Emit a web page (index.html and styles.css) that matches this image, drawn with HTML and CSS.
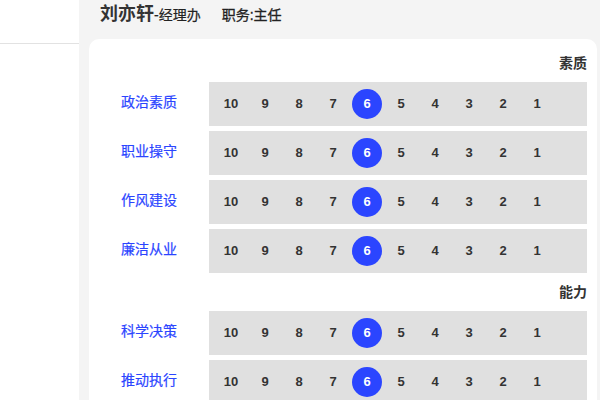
FILE: index.html
```html
<!DOCTYPE html>
<html lang="zh">
<head>
<meta charset="utf-8">
<link rel="stylesheet" href="styles.css">
</head>
<body>
<div class="page">
  <aside class="side"><div class="side-top"></div></aside>
  <main class="main">
    <header class="head">
      <span class="name">刘亦轩</span><span class="dept">-经理办</span>
      <span class="duty">职务:主任</span>
    </header>
    <section class="card">
      <div class="group-title">素质</div>
      <div class="row"><div class="label">政治素质</div><div class="scale"><span class="n">10</span><span class="n">9</span><span class="n">8</span><span class="n">7</span><span class="n on">6</span><span class="n">5</span><span class="n">4</span><span class="n">3</span><span class="n">2</span><span class="n">1</span></div></div>
      <div class="row"><div class="label">职业操守</div><div class="scale"><span class="n">10</span><span class="n">9</span><span class="n">8</span><span class="n">7</span><span class="n on">6</span><span class="n">5</span><span class="n">4</span><span class="n">3</span><span class="n">2</span><span class="n">1</span></div></div>
      <div class="row"><div class="label">作风建设</div><div class="scale"><span class="n">10</span><span class="n">9</span><span class="n">8</span><span class="n">7</span><span class="n on">6</span><span class="n">5</span><span class="n">4</span><span class="n">3</span><span class="n">2</span><span class="n">1</span></div></div>
      <div class="row"><div class="label">廉洁从业</div><div class="scale"><span class="n">10</span><span class="n">9</span><span class="n">8</span><span class="n">7</span><span class="n on">6</span><span class="n">5</span><span class="n">4</span><span class="n">3</span><span class="n">2</span><span class="n">1</span></div></div>
      <div class="group-title">能力</div>
      <div class="row"><div class="label">科学决策</div><div class="scale"><span class="n">10</span><span class="n">9</span><span class="n">8</span><span class="n">7</span><span class="n on">6</span><span class="n">5</span><span class="n">4</span><span class="n">3</span><span class="n">2</span><span class="n">1</span></div></div>
      <div class="row"><div class="label">推动执行</div><div class="scale"><span class="n">10</span><span class="n">9</span><span class="n">8</span><span class="n">7</span><span class="n on">6</span><span class="n">5</span><span class="n">4</span><span class="n">3</span><span class="n">2</span><span class="n">1</span></div></div>
    </section>
  </main>
</div>
</body>
</html>
```
FILE: styles.css
```css
* { box-sizing: border-box; }
html, body { margin: 0; padding: 0; }
body {
  font-family: "Liberation Sans", "Noto Sans CJK SC", sans-serif;
  color: #333;
  width: 600px;
  height: 400px;
  overflow: hidden;
}
.page {
  display: flex;
  height: 400px;
}
.side {
  width: 79px;
  flex: none;
  background: #fff;
}
.side-top {
  height: 44px;
  border-bottom: 1px solid #e2e2e2;
}
.main {
  flex: 1;
  background: #f4f4f4;
  padding: 0 3px 0 10px;
  display: flex;
  flex-direction: column;
  min-height: 0;
}
.head {
  flex: none;
  height: 39px;
  padding: 2px 0 0 11px;
  display: flex;
  align-items: baseline;
  line-height: 24px;
}
.name {
  font-size: 18px;
  font-weight: bold;
  color: #333;
}
.dept {
  font-size: 14px;
  color: #222;
  -webkit-text-stroke: 0.2px #222;
}
.duty {
  font-size: 14px;
  margin-left: 21px;
  color: #222;
  -webkit-text-stroke: 0.3px #222;
}
.card {
  flex: none;
  background: #fff;
  border-radius: 10px 10px 0 0;
  padding: 5px 10px 0 0;
  display: flex;
  flex-direction: column;
}
.group-title {
  height: 38px;
  line-height: 38px;
  text-align: right;
  font-size: 14px;
  font-weight: bold;
  color: #333;
}
.row {
  display: flex;
  align-items: center;
  height: 44px;
  margin-bottom: 5px;
  flex: none;
}
.row + .group-title { margin-top: -5px; }
.label {
  width: 120px;
  flex: none;
  text-align: center;
  color: #2b45ff;
  font-size: 14px;
  padding-bottom: 6px;
  -webkit-text-stroke: 0.2px #2b45ff;
}
.scale {
  flex: 1;
  height: 44px;
  background: #e0e0e0;
  display: flex;
  align-items: center;
  gap: 4px;
  padding-left: 7px;
}
.n {
  width: 30px;
  height: 30px;
  line-height: 30px;
  text-align: center;
  font-size: 13px;
  font-weight: bold;
  color: #333;
  border-radius: 50%;
}
.n.on {
  background: #2b45ff;
  color: #fff;
}
```
